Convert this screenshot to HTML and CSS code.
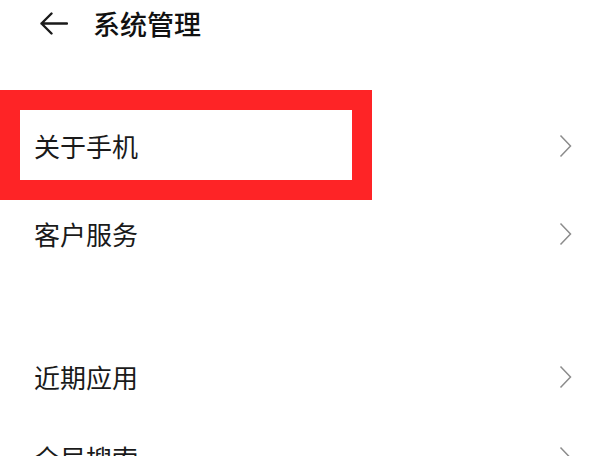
FILE: index.html
```html
<!DOCTYPE html>
<html lang="zh-CN">
<head>
<meta charset="utf-8">
<link rel="stylesheet" href="styles.css">
</head>
<body>
<header class="topbar">
  <svg class="back" width="29" height="23" viewBox="0 0 29 23"><path d="M28 11.5H2.5M12.5 1.5L2.5 11.5L12.5 21.5" fill="none" stroke="#1a1a1a" stroke-width="2.4" stroke-linecap="round" stroke-linejoin="round"/></svg>
  <h1 class="title">系统管理</h1>
</header>
<section class="group first">
  <div class="row">
    <span class="label">关于手机</span>
    <svg class="chev" width="13" height="24" viewBox="0 0 13 24"><path d="M1.5 1.5L11.5 12L1.5 22.5" fill="none" stroke="#8c8c8c" stroke-width="1.5"/></svg>
    <div class="highlight"></div>
  </div>
  <div class="row">
    <span class="label">客户服务</span>
    <svg class="chev" width="13" height="24" viewBox="0 0 13 24"><path d="M1.5 1.5L11.5 12L1.5 22.5" fill="none" stroke="#8c8c8c" stroke-width="1.5"/></svg>
  </div>
</section>
<section class="group second">
  <div class="row short">
    <span class="label">近期应用</span>
    <svg class="chev" width="13" height="24" viewBox="0 0 13 24"><path d="M1.5 1.5L11.5 12L1.5 22.5" fill="none" stroke="#8c8c8c" stroke-width="1.5"/></svg>
  </div>
  <div class="row short">
    <span class="label">全局搜索</span>
    <svg class="chev" width="13" height="24" viewBox="0 0 13 24"><path d="M1.5 1.5L11.5 12L1.5 22.5" fill="none" stroke="#8c8c8c" stroke-width="1.5"/></svg>
  </div>
</section>
</body>
</html>
```
FILE: styles.css
```css
html, body {
  margin: 0;
  padding: 0;
  background: #ffffff;
  overflow: hidden;
  height: 456px;
}
body {
  font-family: "Noto Sans CJK SC", "Noto Sans", sans-serif;
  color: #1a1a1a;
}
.topbar {
  height: 46px;
  display: flex;
  align-items: center;
  padding-left: 39px;
  gap: 25px;
}
.back {
  display: block;
}
.title {
  margin: 0;
  font-size: 27px;
  font-weight: 500;
  line-height: 1;
  color: #111111;
}
.group.first {
  margin-top: 56px;
}
.group.second {
  margin-top: 58px;
}
.row {
  position: relative;
  height: 88px;
  display: flex;
  align-items: center;
  justify-content: space-between;
  padding: 0 36px 0 34px;
}
.row.short {
  height: 81px;
}
.label {
  font-size: 26px;
  line-height: 1;
  color: #1a1a1a;
}
.chev {
  display: block;
}
.highlight {
  position: absolute;
  left: 0;
  top: -12px;
  width: 372px;
  height: 110px;
  box-sizing: border-box;
  border: 20px solid #fe2426;
  pointer-events: none;
}
```
